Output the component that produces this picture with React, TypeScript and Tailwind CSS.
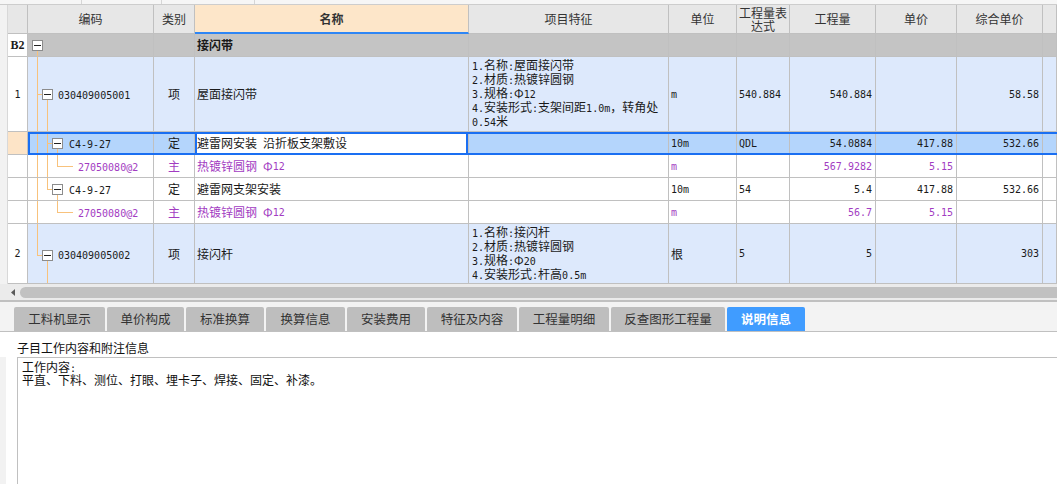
import React from 'react';

/* ───────── helpers ───────── */
// ASCII runs get a narrow mono face so that mixed text keeps the half-width look of the grid
const Mixed = ({ text }: { text: string }) => {
  const parts = text.match(/[\x20-\x7e]+|[^\x20-\x7e]+/g) ?? [];
  return (
    <>
      {parts.map((p, i) =>
        /^[\x20-\x7e]+$/.test(p) ? (
          <span key={i} className="font-['DejaVu_Sans_Mono',monospace] text-[10px] whitespace-pre">
            {p}
          </span>
        ) : (
          <span key={i}>{p}</span>
        ),
      )}
    </>
  );
};

type Seg = [number, number, number, number]; // x, y, w, h inside the code cell

const MinusBox = ({ x, y }: { x: number; y: number }) => (
  <div
    className="absolute w-[11px] h-[11px] border border-[#8c8c8c] bg-white flex items-center justify-center"
    style={{ left: x, top: y }}
  >
    <div className="w-[7px] h-px bg-[#222]" />
  </div>
);

const W = [
  'w-[20px]',
  'w-[126px]',
  'w-[41px]',
  'w-[274px]',
  'w-[200px]',
  'w-[68px]',
  'w-[53px]',
  'w-[86px]',
  'w-[81px]',
  'w-[86px]',
  'w-[14px]',
];

const H: Record<number, string> = { 23: 'h-[23px]', 75: 'h-[75px]', 60: 'h-[60px]' };

type Row = {
  h: number;
  kind: 'group' | 'item' | 'def' | 'mat';
  num?: string;
  code?: string;
  codeX: number;
  box?: { x: number; y: number };
  segs: Seg[];
  type?: string;
  name?: string;
  feat?: string[];
  unit?: string;
  expr?: string;
  qty?: string;
  price?: string;
  total?: string;
  selected?: boolean;
};

const A = 9;
const B = 19;
const C = 29;

const rows: Row[] = [
  {
    h: 23,
    kind: 'group',
    num: 'B2',
    codeX: 0,
    box: { x: 4, y: 6 },
    segs: [[A, 17, 1, 6]],
    name: '接闪带',
  },
  {
    h: 75,
    kind: 'item',
    num: '1',
    code: '030409005001',
    codeX: 30,
    box: { x: 14, y: 32 },
    segs: [
      [A, 0, 1, 75],
      [A, 37, 5, 1],
      [B, 43, 1, 32],
    ],
    type: '项',
    name: '屋面接闪带',
    feat: ['1.名称:屋面接闪带', '2.材质:热镀锌圆钢', '3.规格:Φ12', '4.安装形式:支架间距1.0m，转角处', '0.54米'],
    unit: 'm',
    expr: '540.884',
    qty: '540.884',
    total: '58.58',
  },
  {
    h: 23,
    kind: 'def',
    selected: true,
    code: 'C4-9-27',
    codeX: 41,
    box: { x: 24, y: 6 },
    segs: [
      [A, 0, 1, 23],
      [B, 0, 1, 23],
      [B, 11, 5, 1],
      [C, 17, 1, 6],
    ],
    type: '定',
    name: '避雷网安装 沿折板支架敷设',
    unit: '10m',
    expr: 'QDL',
    qty: '54.0884',
    price: '417.88',
    total: '532.66',
  },
  {
    h: 23,
    kind: 'mat',
    code: '27050080@2',
    codeX: 50,
    segs: [
      [A, 0, 1, 23],
      [B, 0, 1, 23],
      [C, 0, 1, 12],
      [C, 11, 16, 1],
    ],
    type: '主',
    name: '热镀锌圆钢 Φ12',
    unit: 'm',
    qty: '567.9282',
    price: '5.15',
  },
  {
    h: 23,
    kind: 'def',
    code: 'C4-9-27',
    codeX: 41,
    box: { x: 24, y: 6 },
    segs: [
      [A, 0, 1, 23],
      [B, 0, 1, 12],
      [B, 11, 5, 1],
      [C, 17, 1, 6],
    ],
    type: '定',
    name: '避雷网支架安装',
    unit: '10m',
    expr: '54',
    qty: '5.4',
    price: '417.88',
    total: '532.66',
  },
  {
    h: 23,
    kind: 'mat',
    code: '27050080@2',
    codeX: 50,
    segs: [
      [A, 0, 1, 23],
      [C, 0, 1, 12],
      [C, 11, 16, 1],
    ],
    type: '主',
    name: '热镀锌圆钢 Φ12',
    unit: 'm',
    qty: '56.7',
    price: '5.15',
  },
  {
    h: 60,
    kind: 'item',
    num: '2',
    code: '030409005002',
    codeX: 30,
    box: { x: 14, y: 26 },
    segs: [
      [A, 0, 1, 32],
      [A, 31, 5, 1],
      [B, 37, 1, 23],
    ],
    type: '项',
    name: '接闪杆',
    feat: ['1.名称:接闪杆', '2.材质:热镀锌圆钢', '3.规格:Φ20', '4.安装形式:杆高0.5m'],
    unit: '根',
    expr: '5',
    qty: '5',
    total: '303',
  },
];

const tabs = [
  { label: '工料机显示', w: 'w-[91px]' },
  { label: '单价构成', w: 'w-[77px]' },
  { label: '标准换算', w: 'w-[78px]' },
  { label: '换算信息', w: 'w-[79px]' },
  { label: '安装费用', w: 'w-[78px]' },
  { label: '特征及内容', w: 'w-[90px]' },
  { label: '工程量明细', w: 'w-[90px]' },
  { label: '反查图形工程量', w: 'w-[114px]' },
  { label: '说明信息', w: 'w-[78px]', active: true },
];

/* ───────── table rows ───────── */
const HeaderRow = () => {
  const base = 'shrink-0 h-full border-r border-b border-[#c0c0c0] bg-[#e7e7e7] flex items-center justify-center text-center';
  return (
    <div className="flex h-[29px] text-[#333]">
      <div className={`${W[0]} ${base}`} />
      <div className={`${W[1]} ${base}`}>编码</div>
      <div className={`${W[2]} ${base}`}>类别</div>
      <div
        className={`${W[3]} shrink-0 h-full border-r border-r-[#c0c0c0] border-b-2 border-b-[#2e86f5] bg-[#fde6c9] flex items-center justify-center font-bold`}
      >
        名称
      </div>
      <div className={`${W[4]} ${base}`}>项目特征</div>
      <div className={`${W[5]} ${base}`}>单位</div>
      <div className={`${W[6]} ${base} flex-col`}>
        <div className="h-[13px] leading-[13px]">工程量表</div>
        <div className="h-[13px] leading-[13px]">达式</div>
      </div>
      <div className={`${W[7]} ${base}`}>工程量</div>
      <div className={`${W[8]} ${base}`}>单价</div>
      <div className={`${W[9]} ${base}`}>综合单价</div>
      <div className={`${W[10]} ${base}`} />
    </div>
  );
};

const DataRow = ({ r }: { r: Row }) => {
  const bg =
    r.kind === 'group'
      ? 'bg-[#c4c4c4]'
      : r.kind === 'item'
        ? 'bg-[#dde9fc]'
        : r.selected
          ? 'bg-[#b4d5fc]'
          : 'bg-white';
  const ink = r.kind === 'mat' ? 'text-[#a23cc2]' : 'text-[#1a1a1a]';
  const line = 'shrink-0 h-full border-r border-b border-[#c0c0c0] flex items-center overflow-hidden relative';
  const cell = `${line} ${bg} ${ink}`;

  return (
    <div className={`relative flex ${H[r.h]}`}>
      <div
        className={`${W[0]} ${line} justify-center text-[#1a1a1a] ${r.selected ? 'bg-[#fde4c7]' : 'bg-white'}`}
      >
        {r.kind === 'group' ? (
          <span className="font-['Liberation_Serif',serif] font-bold text-[12px]">{r.num}</span>
        ) : (
          <Mixed text={r.num ?? ''} />
        )}
      </div>

      {/* code with tree guides */}
      <div className={`${W[1]} ${cell}`}>
        {r.segs.map((s, i) => (
          <div
            key={i}
            className="absolute bg-[#f8c27c]"
            style={{ left: s[0], top: s[1], width: s[2], height: s[3] }}
          />
        ))}
        {r.box && <MinusBox x={r.box.x} y={r.box.y} />}
        {r.code && (
          <span className="whitespace-nowrap" style={{ paddingLeft: r.codeX }}>
            <Mixed text={r.code} />
          </span>
        )}
      </div>

      <div className={`${W[2]} ${cell} justify-center`}>{r.type}</div>

      <div
        className={`${W[3]} ${line} pl-[2px] whitespace-nowrap ${ink} ${r.selected ? 'bg-white' : bg} ${r.kind === 'group' ? 'font-bold' : ''}`}
      >
        {r.name && <Mixed text={r.name} />}
        {r.selected && <div className="absolute inset-0 border-x-2 border-[#1a6ff2] pointer-events-none" />}
      </div>

      <div className={`${W[4]} ${cell} pl-[3px]`}>
        {r.feat && (
          <div className="flex flex-col whitespace-nowrap">
            {r.feat.map((f, i) => (
              <div key={i} className="h-[14px] leading-[14px] flex items-center">
                <span>
                  <Mixed text={f} />
                </span>
              </div>
            ))}
          </div>
        )}
      </div>

      <div className={`${W[5]} ${cell} pl-[2px]`}>{r.unit && <Mixed text={r.unit} />}</div>
      <div className={`${W[6]} ${cell} pl-[2px]`}>{r.expr && <Mixed text={r.expr} />}</div>
      <div className={`${W[7]} ${cell} justify-end pr-[3px]`}>{r.qty && <Mixed text={r.qty} />}</div>
      <div className={`${W[8]} ${cell} justify-end pr-[3px]`}>{r.price && <Mixed text={r.price} />}</div>
      <div className={`${W[9]} ${cell} justify-end pr-[3px]`}>{r.total && <Mixed text={r.total} />}</div>
      <div className={`${W[10]} ${cell}`} />

      {/* selected row outline */}
      {r.selected && (
        <div className="absolute top-0 bottom-0 left-[20px] right-0 border-y-2 border-l-2 border-[#1a6ff2] pointer-events-none" />
      )}
    </div>
  );
};

/* ───────── page ───────── */
export default function App() {
  return (
    <div className="w-[1057px] h-[484px] overflow-hidden bg-white font-['Noto_Sans_CJK_SC',sans-serif] text-[12px] text-[#1a1a1a] flex flex-col">
      {/* strip above the grid */}
      <div className="h-[5px] shrink-0 flex bg-[#f6f6f6] border-b border-[#cdcdcd]">
        <div className="w-[82px] border-r border-[#d6d6d6]" />
        <div className="w-[80px] border-r border-[#d6d6d6]" />
        <div className="w-[93px] border-r border-[#d6d6d6]" />
      </div>

      {/* grid */}
      <div className="flex shrink-0">
        <div className="w-[8px] shrink-0 bg-[#f2f2f2] border-r border-[#d8d8d8]" />
        <div className="w-[1049px] flex flex-col">
          <HeaderRow />
          {rows.map((r, i) => (
            <DataRow key={i} r={r} />
          ))}
        </div>
      </div>

      {/* horizontal scroll bar */}
      <div className="h-[3px] shrink-0 bg-[#ebebeb]" />
      <div className="h-[11px] shrink-0 flex items-center bg-[#ebebeb]">
        <div className="w-[20px] h-full flex items-center justify-end pr-[5px]">
          <svg width="4" height="7" viewBox="0 0 4 7">
            <path d="M4 0 L0 3.5 L4 7Z" fill="#5a5a5a" />
          </svg>
        </div>
        <div className="flex-1 h-full bg-[#c1c1c1] rounded-l-[6px]" />
      </div>
      <div className="h-[2px] shrink-0 bg-[#ebebeb]" />
      <div className="h-[2px] shrink-0 bg-[#c0c0c0]" />

      {/* tab bar */}
      <div className="h-[30px] shrink-0 flex items-end gap-[2px] pl-[14px] bg-[#f3f3f3] border-b border-[#c0c0c0]">
        {tabs.map((t) => (
          <div
            key={t.label}
            className={`${t.w} h-[24px] shrink-0 rounded-t-[2px] flex items-center justify-center text-[12.5px] ${
              t.active ? 'bg-[#409cff] text-white font-semibold' : 'bg-[#bebebe] text-[#333]'
            }`}
          >
            {t.label}
          </div>
        ))}
      </div>

      {/* notes panel */}
      <div className="h-[25px] shrink-0 flex items-end pl-[17px] pb-[1px] leading-[16px] text-[#111]">
        子目工作内容和附注信息
      </div>
      <div className="flex-1 flex">
        <div className="w-[6px] bg-[#f2f2f2]" />
        <div className="w-[11px]" />
        <div className="flex-1 border-t border-l border-[#c0c0c0] pl-[4px] pt-[4px] text-[#111]">
          <div className="h-[12px] leading-[12px] flex items-center">
            <span>
              <Mixed text="工作内容:" />
            </span>
          </div>
          <div className="h-[12px] leading-[12px] flex items-center">平直、下料、测位、打眼、埋卡子、焊接、固定、补漆。</div>
        </div>
      </div>
    </div>
  );
}
